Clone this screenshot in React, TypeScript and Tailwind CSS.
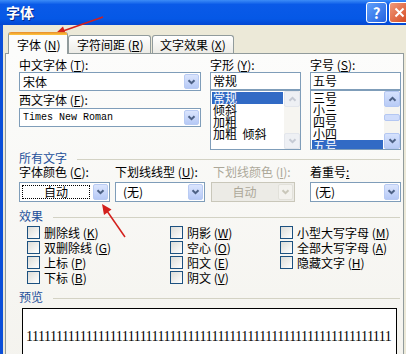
import type { ReactNode } from "react";

function Chevron({ up = false, color = "#4d6185" }: { up?: boolean; color?: string }) {
  return (
    <svg width="9" height="6" viewBox="0 0 9 6" className={up ? "rotate-180" : ""}>
      <path d="M1.5 1.2 L4.5 4.2 L7.5 1.2" fill="none" stroke={color} strokeWidth="2" />
    </svg>
  );
}

function DropBtn({ disabled }: { disabled?: boolean }) {
  return (
    <div
      className={`m-px flex w-[15px] shrink-0 items-center justify-center rounded-[2px] border ${
        disabled
          ? "border-[#e2e1da] bg-[#f3f2ee]"
          : "border-[#b9cbf3] bg-[linear-gradient(to_bottom,#dbe5fd,#b6c9f6)]"
      }`}
    >
      <Chevron color={disabled ? "#c9c7ba" : "#4d6185"} />
    </div>
  );
}

function Combo({
  children,
  className = "",
  inner = "",
  disabled,
}: {
  children: ReactNode;
  className?: string;
  inner?: string;
  disabled?: boolean;
}) {
  return (
    <div
      className={`flex border ${
        disabled ? "border-[#c9c7ba] bg-[#ecebe6] text-[#aca899]" : "border-[#7f9db9] bg-white"
      } ${className}`}
    >
      <div className={`flex min-w-0 flex-1 items-center ${inner}`}>{children}</div>
      <DropBtn disabled={disabled} />
    </div>
  );
}

function Label({ children, className = "" }: { children: ReactNode; className?: string }) {
  return <div className={`h-[14px] whitespace-nowrap leading-[14px] ${className}`}>{children}</div>;
}

function ScrollBar({ enabled }: { enabled?: boolean }) {
  const btn = enabled
    ? "border-[#b4c7f2] bg-[linear-gradient(to_bottom,#d6e2fd,#b8cbf6)]"
    : "border-[#e3e6ec] bg-[#eef0f4]";
  const c = enabled ? "#4d6185" : "#c5cad4";
  return (
    <div className="flex w-[16px] shrink-0 flex-col bg-[#f6f5f1]">
      <div className={`flex h-[16px] items-center justify-center rounded-[2px] border ${btn}`}>
        <Chevron up color={c} />
      </div>
      <div className="flex-1">
        {enabled && (
          <div className="mt-[7px] h-[7px] rounded-[2px] border border-[#b4c7f2] bg-[#cfdcfb]" />
        )}
      </div>
      <div className={`flex h-[16px] items-center justify-center rounded-[2px] border ${btn}`}>
        <Chevron color={c} />
      </div>
    </div>
  );
}

function ListBox({ items, selected, enabled }: { items: string[]; selected: string; enabled?: boolean }) {
  return (
    <div className="flex h-[60px] border border-[#7f9db9] bg-white">
      <div className="mr-px flex-1 overflow-hidden pl-px pt-px">
        {items.map((it) => (
          <div
            key={it}
            className={`h-[12px] whitespace-pre pl-[1px] leading-[12px] ${
              it === selected ? "bg-[#316ac5] text-white" : ""
            }`}
          >
            {it}
          </div>
        ))}
      </div>
      <ScrollBar enabled={enabled} />
    </div>
  );
}

function Group({ title, className = "" }: { title: string; className?: string }) {
  return (
    <div className={`flex h-[14px] items-center ${className}`}>
      <span className="leading-[14px] text-[#24509a]">{title}</span>
      <span className="ml-[10px] mr-[1px] mt-[2px] h-px flex-1 bg-[#d3d2c4]" />
    </div>
  );
}

function Check({ children }: { children: ReactNode }) {
  return (
    <div className="flex items-center whitespace-nowrap">
      <span className="h-[13px] w-[13px] shrink-0 border border-[#1c5180] bg-[linear-gradient(135deg,#dcdcd7,#ffffff)]" />
      <span className="ml-[4px] leading-[14px]">{children}</span>
    </div>
  );
}

export default function App() {
  return (
    <div className="relative flex h-[354px] w-[406px] flex-col overflow-hidden bg-[#ece9d8] text-[12px] text-black [font-family:'Noto_Sans_CJK_SC','Noto_Sans',sans-serif]">
      {/* 標題列 */}
      <div className="flex h-[25px] shrink-0 items-center bg-[linear-gradient(to_bottom,#3c8cf7_0%,#0a5ae8_18%,#0558e6_75%,#0347d2_100%)] pl-[6px]">
        <span className="text-[14px] font-bold text-white [text-shadow:1px_1px_0_#0a2a8a]">字体</span>
        <div className="-mr-[4px] ml-auto flex gap-[2px]">
          <div className="flex h-[21px] w-[21px] items-center justify-center rounded-[3px] border border-white bg-[linear-gradient(135deg,#5fa0fb,#2462e0)] text-[15px] font-bold leading-none text-white">
            ?
          </div>
          <div className="flex h-[21px] w-[21px] items-center justify-center rounded-[3px] border border-white bg-[linear-gradient(135deg,#f09a7a,#d4461d)]">
            <svg width="11" height="11" viewBox="0 0 11 11">
              <path d="M1.5 1.5 L9.5 9.5 M9.5 1.5 L1.5 9.5" stroke="#fff" strokeWidth="2" />
            </svg>
          </div>
        </div>
      </div>

      <div className="flex flex-1">
        <div className="w-[3px] shrink-0 bg-[#0b4fd9]" />
        <div className="flex flex-1 flex-col pl-[2px] pt-[7px]">
          {/* 分頁 */}
          <div className="flex h-[21px] items-end pl-[3px]">
            <div className="relative z-10 -mb-px flex h-[22px] w-[60px] flex-col rounded-t-[3px] border-x border-[#919b9c] bg-[#fcfcfb]">
              <div className="h-[3px] rounded-t-[2px] bg-[linear-gradient(to_bottom,#e68b2c,#ffc73c)]" />
              <div className="flex flex-1 items-center whitespace-nowrap pl-[8px]">
                字体 (<u>N</u>)
              </div>
            </div>
            <div className="flex h-[18px] w-[83px] items-center whitespace-nowrap rounded-t-[3px] border border-b-0 border-[#919b9c] bg-[linear-gradient(to_bottom,#ffffff,#ecebe6)] pl-[8px]">
              字符间距 (<u>R</u>)
            </div>
            <div className="ml-px flex h-[18px] w-[82px] items-center whitespace-nowrap rounded-t-[3px] border border-b-0 border-[#919b9c] bg-[linear-gradient(to_bottom,#ffffff,#ecebe6)] pl-[7px]">
              文字效果 (<u>X</u>)
            </div>
          </div>

          {/* 面板 */}
          <div className="flex w-[399px] flex-1 flex-col border border-[#919b9c] bg-[linear-gradient(to_bottom,#fcfcfb,#f4f3ee)] pl-[13px] pr-[2px] pt-[4px]">
            <div className="grid grid-cols-[182px_91px_91px] gap-x-[9px]">
              <div className="flex flex-col">
                <Label>
                  中文字体 (<u>T</u>):
                </Label>
                <Combo className="h-[19px]" inner="pl-[3px]">
                  宋体
                </Combo>
                <Label className="mt-[2px]">
                  西文字体 (<u>F</u>):
                </Label>
                <Combo className="mt-px h-[19px]" inner="pl-[3px] text-[10px] [font-family:'Liberation_Mono',monospace]">
                  Times New Roman
                </Combo>
              </div>
              <div className="flex flex-col">
                <Label>
                  字形 (<u>Y</u>):
                </Label>
                <div className="flex h-[18px] items-center border border-[#7f9db9] bg-white pl-[2px]">常规</div>
                <ListBox items={["常规", "倾斜", "加粗", "加粗  倾斜"]} selected="常规" />
              </div>
              <div className="flex flex-col">
                <Label>
                  字号 (<u>S</u>):
                </Label>
                <div className="flex h-[18px] items-center border border-[#7f9db9] bg-white pl-[2px]">五号</div>
                <ListBox items={["三号", "小三", "四号", "小四", "五号"]} selected="五号" enabled />
              </div>
            </div>

            <Group title="所有文字" className="mt-px" />

            <div className="flex">
              <div className="flex w-[91px] flex-col">
                <Label>
                  字体颜色 (<u>C</u>):
                </Label>
                <Combo className="mt-[3px] h-[20px]" inner="p-[2px]">
                  <div className="flex h-full flex-1 items-center justify-center border border-dotted border-black">
                    自动
                  </div>
                </Combo>
              </div>
              <div className="ml-[5px] flex w-[90px] flex-col">
                <Label>
                  下划线线型 (<u>U</u>):
                </Label>
                <Combo className="mt-[3px] h-[20px]" inner="pl-[7px]">
                  (无)
                </Combo>
              </div>
              <div className="ml-[6px] flex w-[84px] flex-col">
                <Label className="pl-[2px] text-[#aca899]">
                  下划线颜色 (<u>I</u>):
                </Label>
                <Combo className="mt-[3px] h-[20px]" inner="justify-center" disabled>
                  自动
                </Combo>
              </div>
              <div className="ml-[15px] flex w-[91px] flex-col">
                <Label>
                  着重号<u>:</u>
                </Label>
                <Combo className="mt-[3px] h-[20px]" inner="pl-[4px]">
                  (无)
                </Combo>
              </div>
            </div>

            <Group title="效果" className="mt-[7px]" />

            <div className="mt-[2px] grid grid-flow-col grid-cols-[143px_110px_1fr] grid-rows-[repeat(4,15px)] pl-[8px]">
              <Check>
                删除线 (<u>K</u>)
              </Check>
              <Check>
                双删除线 (<u>G</u>)
              </Check>
              <Check>
                上标 (<u>P</u>)
              </Check>
              <Check>
                下标 (<u>B</u>)
              </Check>
              <Check>
                阴影 (<u>W</u>)
              </Check>
              <Check>
                空心 (<u>O</u>)
              </Check>
              <Check>
                阳文 (<u>E</u>)
              </Check>
              <Check>
                阴文 (<u>V</u>)
              </Check>
              <Check>
                小型大写字母 (<u>M</u>)
              </Check>
              <Check>
                全部大写字母 (<u>A</u>)
              </Check>
              <Check>
                隐藏文字 (<u>H</u>)
              </Check>
            </div>

            <Group title="预览" className="mt-[5px]" />

            <div className="ml-[3px] mt-[4px] h-[60px] w-[375px] overflow-hidden border border-black bg-white pl-[3px] pt-[20px]">
              <div className="whitespace-nowrap text-[14px] leading-[16px] tracking-[-0.5px] [font-family:'Liberation_Serif',serif]">
                {"1".repeat(61)}
              </div>
            </div>
          </div>
        </div>
      </div>

      {/* 紅色標註箭嘴 */}
      <svg className="pointer-events-none absolute left-0 top-0" width="406" height="354">
        <line x1="103" y1="17" x2="63" y2="31" stroke="#d3201c" strokeWidth="1.5" />
        <polygon points="55,34 66,34.6 63,26.5" fill="#d3201c" />
        <line x1="125" y1="237" x2="107" y2="211" stroke="#d3201c" strokeWidth="1.5" />
        <polygon points="102,204 111.5,209.5 104,215" fill="#d3201c" />
      </svg>
    </div>
  );
}
